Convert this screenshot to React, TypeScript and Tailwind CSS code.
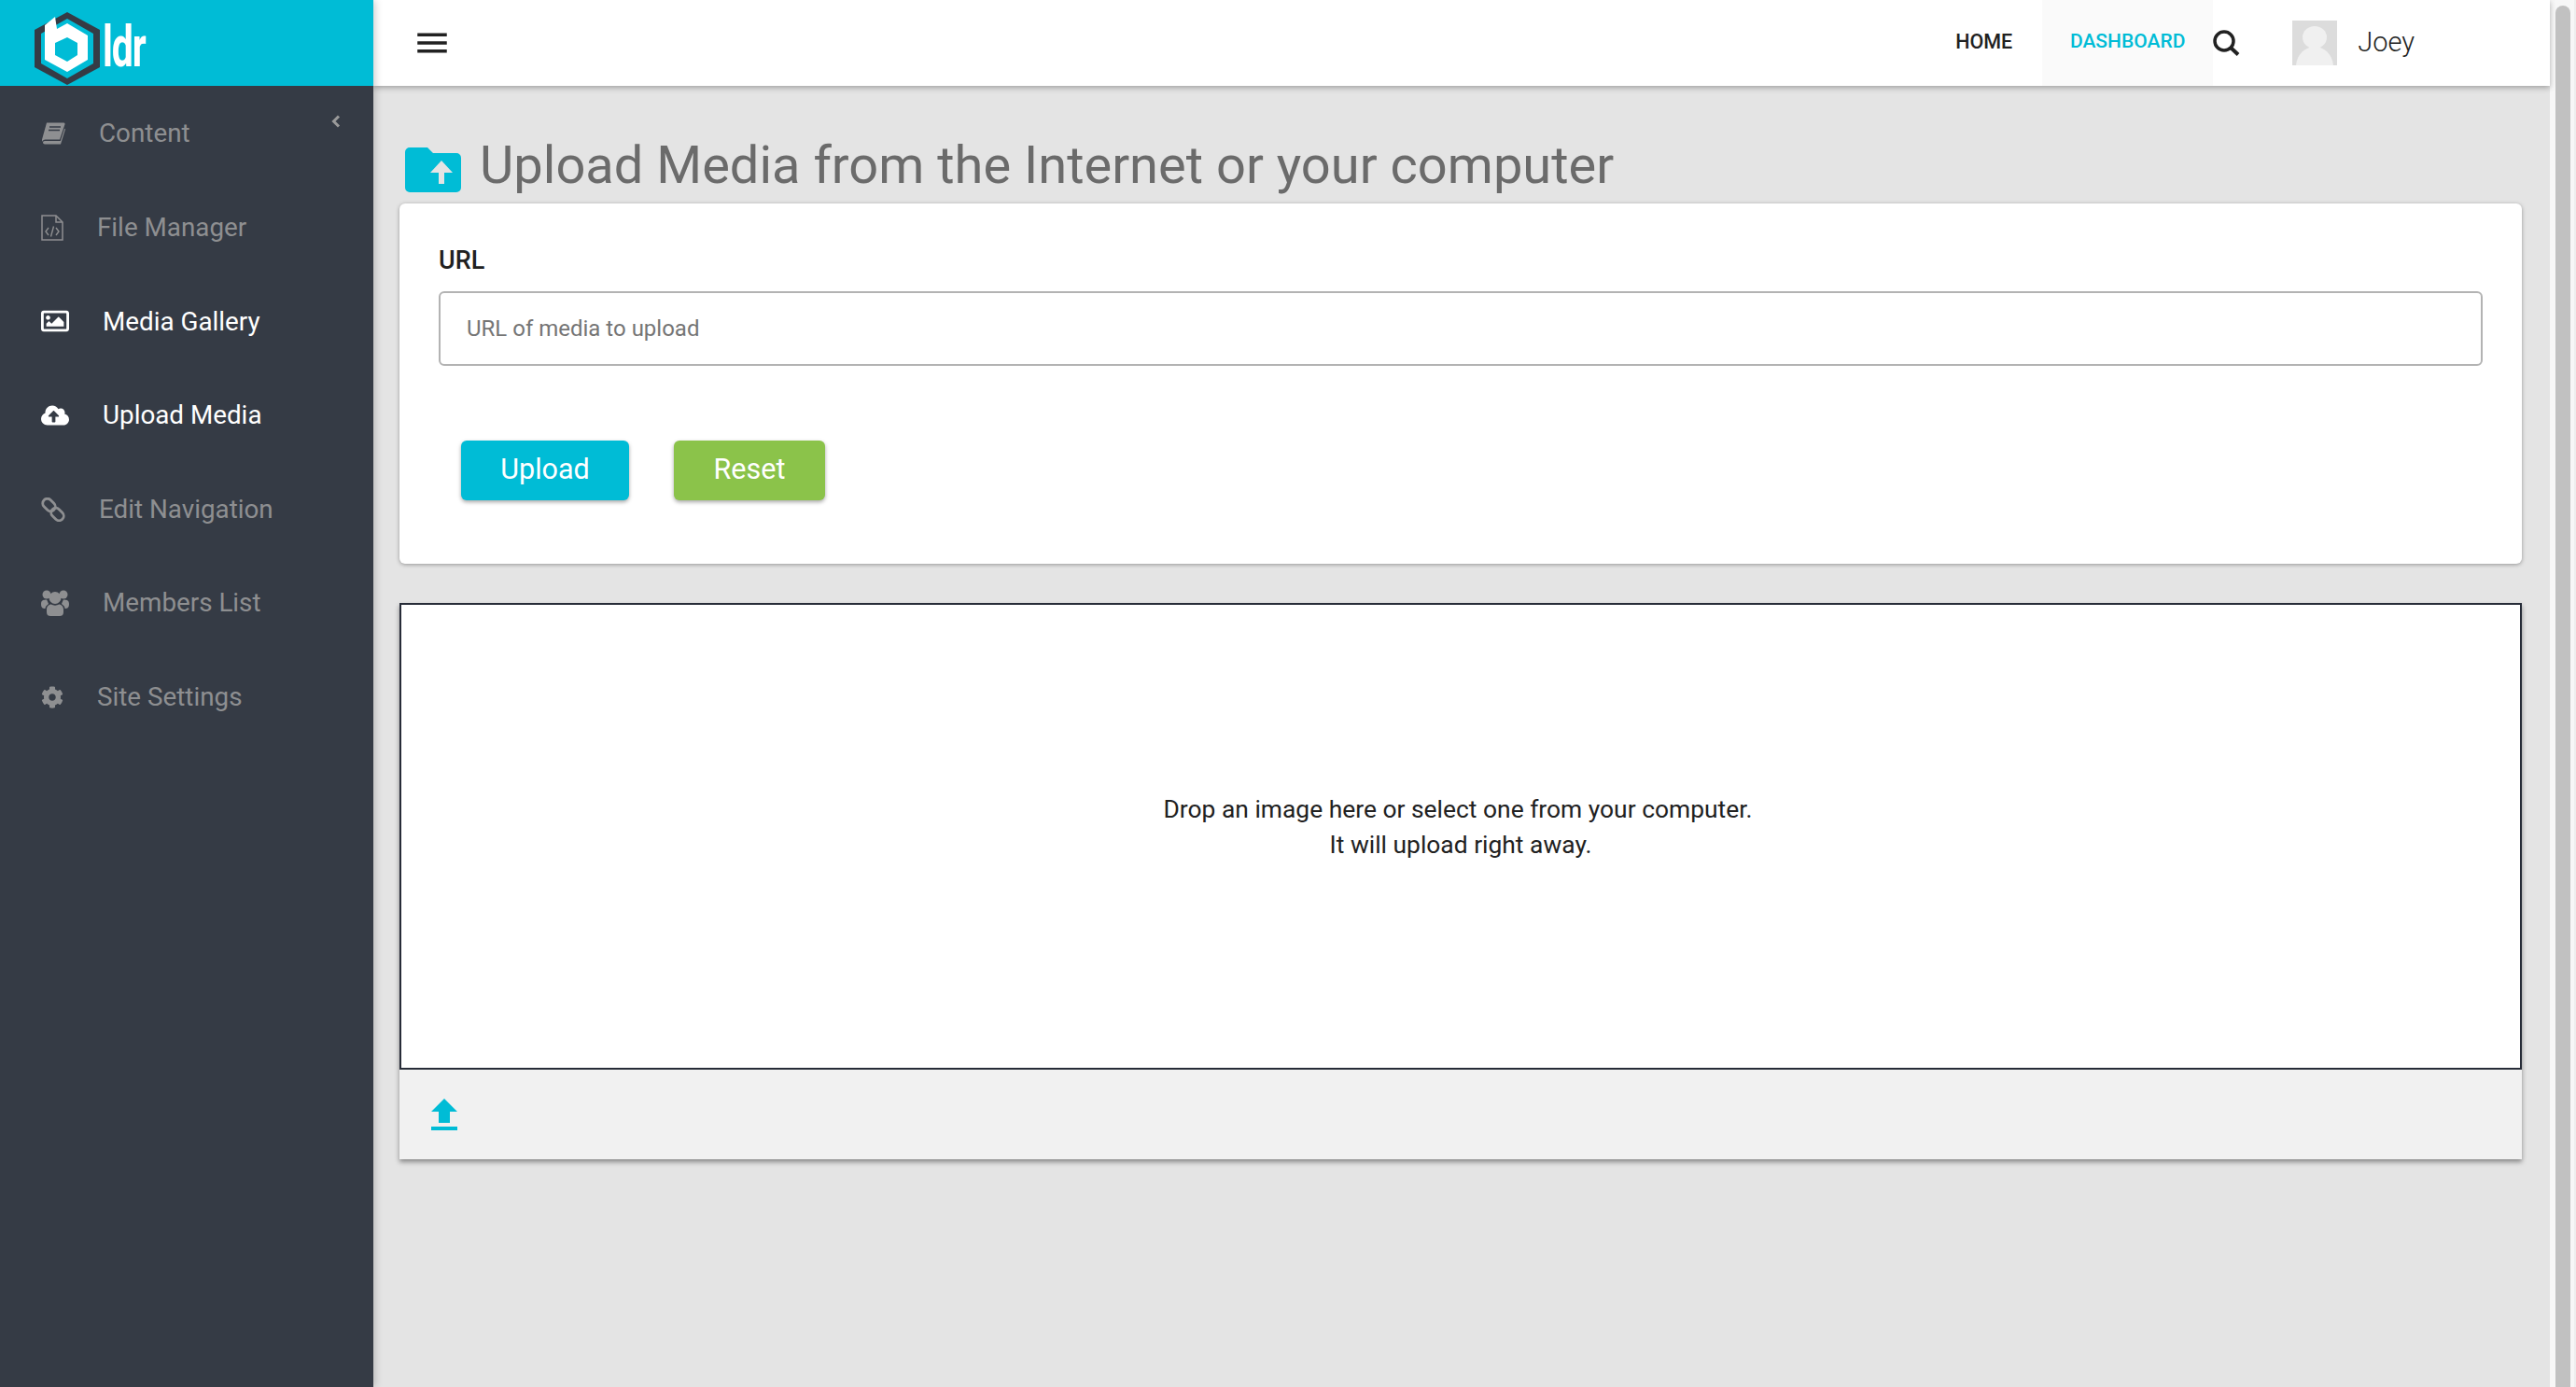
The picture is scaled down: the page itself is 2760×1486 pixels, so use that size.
import type { ReactNode } from "react";
import { FaCloudUploadAlt, FaCog, FaRegImage } from "react-icons/fa";
import { MdMenu } from "react-icons/md";

interface NavItem {
  label: string;
  icon: ReactNode;
  textClass: string;
  active?: boolean;
}

function BookIcon() {
  return (
    <svg width="26" height="24" viewBox="0 0 26 24" className="shrink-0" fill="currentColor">
      <path d="M6 0.5 H24 a1.5 1.5 0 0 1 1.4 2 L20 18.5 H4.5 C3 18.5 1.5 19.5 1.2 21 L1 18.5 Z" />
      <path d="M2 21.5 C2 20.5 3 20 5 20 H20.8 L25.2 6.5 L26 7.5 L21 23.5 H4 C3 23.5 2 22.8 2 21.5 Z" />
      <path d="M9 5 H21 M8 8.5 H20" stroke="#353b45" strokeWidth="1.6" />
    </svg>
  );
}

function FileCodeIcon() {
  return (
    <svg width="24" height="28" viewBox="0 0 24 28" className="shrink-0" fill="none" stroke="currentColor" strokeWidth="1.5">
      <path d="M1 1 H16 L23 8 V27 H1 Z" />
      <path d="M16 1 V8 H23" />
      <path d="M8 14 L5 18 L8 22 M16 14 L19 18 L16 22 M13.5 12.5 L10.5 23.5" strokeWidth="1.4" />
    </svg>
  );
}

function ChainIcon() {
  return (
    <svg width="26" height="26" viewBox="0 0 26 26" className="shrink-0" fill="none" stroke="currentColor" strokeWidth="2.8">
      <rect x="1" y="3" width="15" height="10" rx="5" transform="rotate(45 8.5 8)" />
      <rect x="10" y="13" width="15" height="10" rx="5" transform="rotate(45 17.5 18)" />
    </svg>
  );
}

function UsersIcon() {
  return (
    <svg width="30" height="28" viewBox="0 0 30 28" className="shrink-0" fill="currentColor">
      <circle cx="6" cy="5" r="4.5" />
      <circle cx="24" cy="5" r="4.5" />
      <circle cx="15" cy="8.5" r="6.5" />
      <path d="M0 15 C0 11 3 10.5 6 10.5 C7 12 7.5 14 8 15 C6 16.5 4.5 18 4.5 20 C1.5 20 0 19 0 15 Z" />
      <path d="M30 15 C30 11 27 10.5 24 10.5 C23 12 22.5 14 22 15 C24 16.5 25.5 18 25.5 20 C28.5 20 30 19 30 15 Z" />
      <path d="M6 24 V21 C6 17 9 15.5 11 15.5 C13 17 17 17 19 15.5 C21 15.5 24 17 24 21 V24 C24 27 22 28 20 28 H10 C8 28 6 27 6 24 Z" />
    </svg>
  );
}

const navItems: NavItem[] = [
  { label: "Content", icon: <BookIcon />, textClass: "ml-[62px]" },
  { label: "File Manager", icon: <FileCodeIcon />, textClass: "ml-[60px]" },
  { label: "Media Gallery", icon: <FaRegImage className="shrink-0 w-[30px] h-[30px]" />, textClass: "ml-[66px]", active: true },
  { label: "Upload Media", icon: <FaCloudUploadAlt className="shrink-0 w-[30px] h-[30px]" />, textClass: "ml-[66px]", active: true },
  { label: "Edit Navigation", icon: <ChainIcon />, textClass: "ml-[62px]" },
  { label: "Members List", icon: <UsersIcon />, textClass: "ml-[66px]" },
  { label: "Site Settings", icon: <FaCog className="shrink-0 w-[24px] h-[24px]" />, textClass: "ml-[60px]" },
];

function Logo() {
  return (
    <div className="flex items-center ml-[36px] mt-[12px]">
      <svg width="72" height="80" viewBox="0 0 72 80" className="shrink-0">
        <path d="M36 1 L71 20 L71 60 L36 79 L1 60 L1 20 Z" fill="#353b45" />
        <path d="M36 8 L64 24 L64 56 L36 72 L8 56 L8 24 Z" fill="#00bcd6" />
        <path d="M12 15 L23 6 L25 19 L36 13 L58 26 L58 52 L36 65 L12 52 Z" fill="#fff" />
        <path d="M36 28 L47 34 L47 47 L36 54 L23 47 L23 34 Z" fill="#00bcd6" />
      </svg>
      <span className="ml-[2px] mt-[-4px] text-[62px] leading-none font-bold text-white scale-x-[0.66] origin-left tracking-tight">
        ldr
      </span>
    </div>
  );
}

function Sidebar() {
  return (
    <aside className="relative z-20 w-[400px] shrink-0 h-full bg-[#353b45] shadow-[2px_0_8px_rgba(0,0,0,0.2)]">
      <div className="h-[92px] bg-[#00bcd6] flex items-center overflow-hidden">
        <Logo />
      </div>
      <svg width="10" height="14" viewBox="0 0 10 14" className="absolute left-[355px] top-[123px]">
        <path d="M8 1.5 L2.5 7 L8 12.5" fill="none" stroke="#9a9a9a" strokeWidth="3" />
      </svg>
      <nav className="pt-[1px]">
        {navItems.map((item) => (
          <div
            key={item.label}
            className={`h-[100.6px] flex items-center pl-[44px] text-[27.8px] ${item.active ? "text-white" : "text-[#8e8f91]"}`}
          >
            <span className="w-0 flex items-center">{item.icon}</span>
            <span className={item.textClass}>{item.label}</span>
          </div>
        ))}
      </nav>
    </aside>
  );
}

function TopBar() {
  return (
    <header className="relative z-10 h-[92px] bg-white flex items-center shadow-[0_2px_6px_rgba(0,0,0,0.3)]">
      <MdMenu className="ml-[42px] w-[42px] h-[42px] text-[#212121]" />
      <div className="ml-auto flex items-center h-full">
        <span className="text-[21.5px] font-medium text-[#212121] mr-[32px] mb-[2px]">HOME</span>
        <span className="h-full w-[183px] bg-[#fafafa] flex items-center justify-center pb-[2px] text-[21px] font-medium text-[#00bcd6]">
          DASHBOARD
        </span>
        <svg width="29" height="28" viewBox="0 0 29 28" className="shrink-0 mb-[1px]" fill="none" stroke="#212121">
          <circle cx="12" cy="12" r="10" strokeWidth="3.5" />
          <path d="M19 19 L27 26.5" strokeWidth="4" />
        </svg>
        <div className="ml-[56px] w-[48px] h-[48px] bg-[#dcdcdc] overflow-hidden">
          <svg width="48" height="48" viewBox="0 0 48 48">
            <ellipse cx="24" cy="18" rx="13" ry="12" fill="#f0f0f0" />
            <path d="M4 48 C5 36 14 28 24 28 C34 28 43 36 44 48 Z" fill="#f0f0f0" />
          </svg>
        </div>
        <span className="ml-[22px] mr-[145px] text-[29px] font-light text-[#212121]">Joey</span>
      </div>
    </header>
  );
}

function UrlCard() {
  return (
    <section className="bg-white rounded-[6px] h-[386px] pt-[41px] px-[42px] shadow-[0_1px_4px_rgba(0,0,0,0.35)]">
      <label className="block text-[27px] font-medium leading-[40px] text-[#212121]">URL</label>
      <div className="mt-[13px] h-[80px] border-2 border-[#b3b3b3] rounded-[6px] flex items-center pl-[28px] text-[24px] text-[#757575]">
        URL of media to upload
      </div>
      <div className="mt-[80px] ml-[24px] flex gap-[48px]">
        <button className="w-[180px] h-[64px] rounded-[6px] bg-[#00bcd6] text-white text-[30.5px] pb-[2px] shadow-[0_2px_4px_rgba(0,0,0,0.35)]">
          Upload
        </button>
        <button className="w-[162px] h-[64px] rounded-[6px] bg-[#8bc34a] text-white text-[30.5px] pb-[2px] shadow-[0_2px_4px_rgba(0,0,0,0.35)]">
          Reset
        </button>
      </div>
    </section>
  );
}

function DropZone() {
  return (
    <section className="mt-[42px] shadow-[0_3px_5px_rgba(0,0,0,0.4)]">
      <div className="h-[500px] bg-white border-2 border-[#272c38] flex flex-col items-center justify-center text-[26.4px] leading-[38px] text-[#212121] pb-[21px]">
        <p className="mr-[6px]">Drop an image here or select one from your computer.</p>
        <p>It will upload right away.</p>
      </div>
      <div className="h-[96px] bg-[#f1f1f1] flex items-center pl-[34px]">
        <svg width="28" height="34" viewBox="0 0 28 34" fill="#00bcd6">
          <path d="M14 0 L28 14 L20 14 L20 26 L8 26 L8 14 L0 14 Z" />
          <rect x="0" y="30" width="28" height="4" />
        </svg>
      </div>
    </section>
  );
}

export default function App() {
  return (
    <div className="h-screen flex overflow-hidden bg-[#e4e4e4] font-['Roboto',sans-serif]">
      <Sidebar />
      <div className="flex-1 min-w-0 flex flex-col h-full">
        <TopBar />
        <main className="pl-[28px] pr-[24px] mr-[6px]">
          <div className="h-[126px] flex items-end pl-[6px] pb-[8px]">
            <svg width="60" height="48" viewBox="0 0 60 48" className="mb-[4px] shrink-0">
              <path d="M5 0 L24 0 L30 6 L55 6 A5 5 0 0 1 60 11 L60 43 A5 5 0 0 1 55 48 L5 48 A5 5 0 0 1 0 43 L0 5 A5 5 0 0 1 5 0 Z" fill="#00bcd6" />
              <path d="M39 14 L51 27 L42 27 L42 39 L36 39 L36 27 L27 27 Z" fill="#e4e4e4" />
            </svg>
            <h1 className="ml-[20px] text-[56px] leading-[66px] text-[#6b6b6b]">
              Upload Media from the Internet or your computer
            </h1>
          </div>
          <UrlCard />
          <DropZone />
        </main>
      </div>
      <div className="w-[28px] shrink-0 h-full bg-[#f7f7f7] border-r-2 border-[#eeeeee] pl-[6px] pt-[6px]">
        <div className="w-[16px] h-full rounded-t-[8px] bg-[#c1c1c1]" />
      </div>
    </div>
  );
}
